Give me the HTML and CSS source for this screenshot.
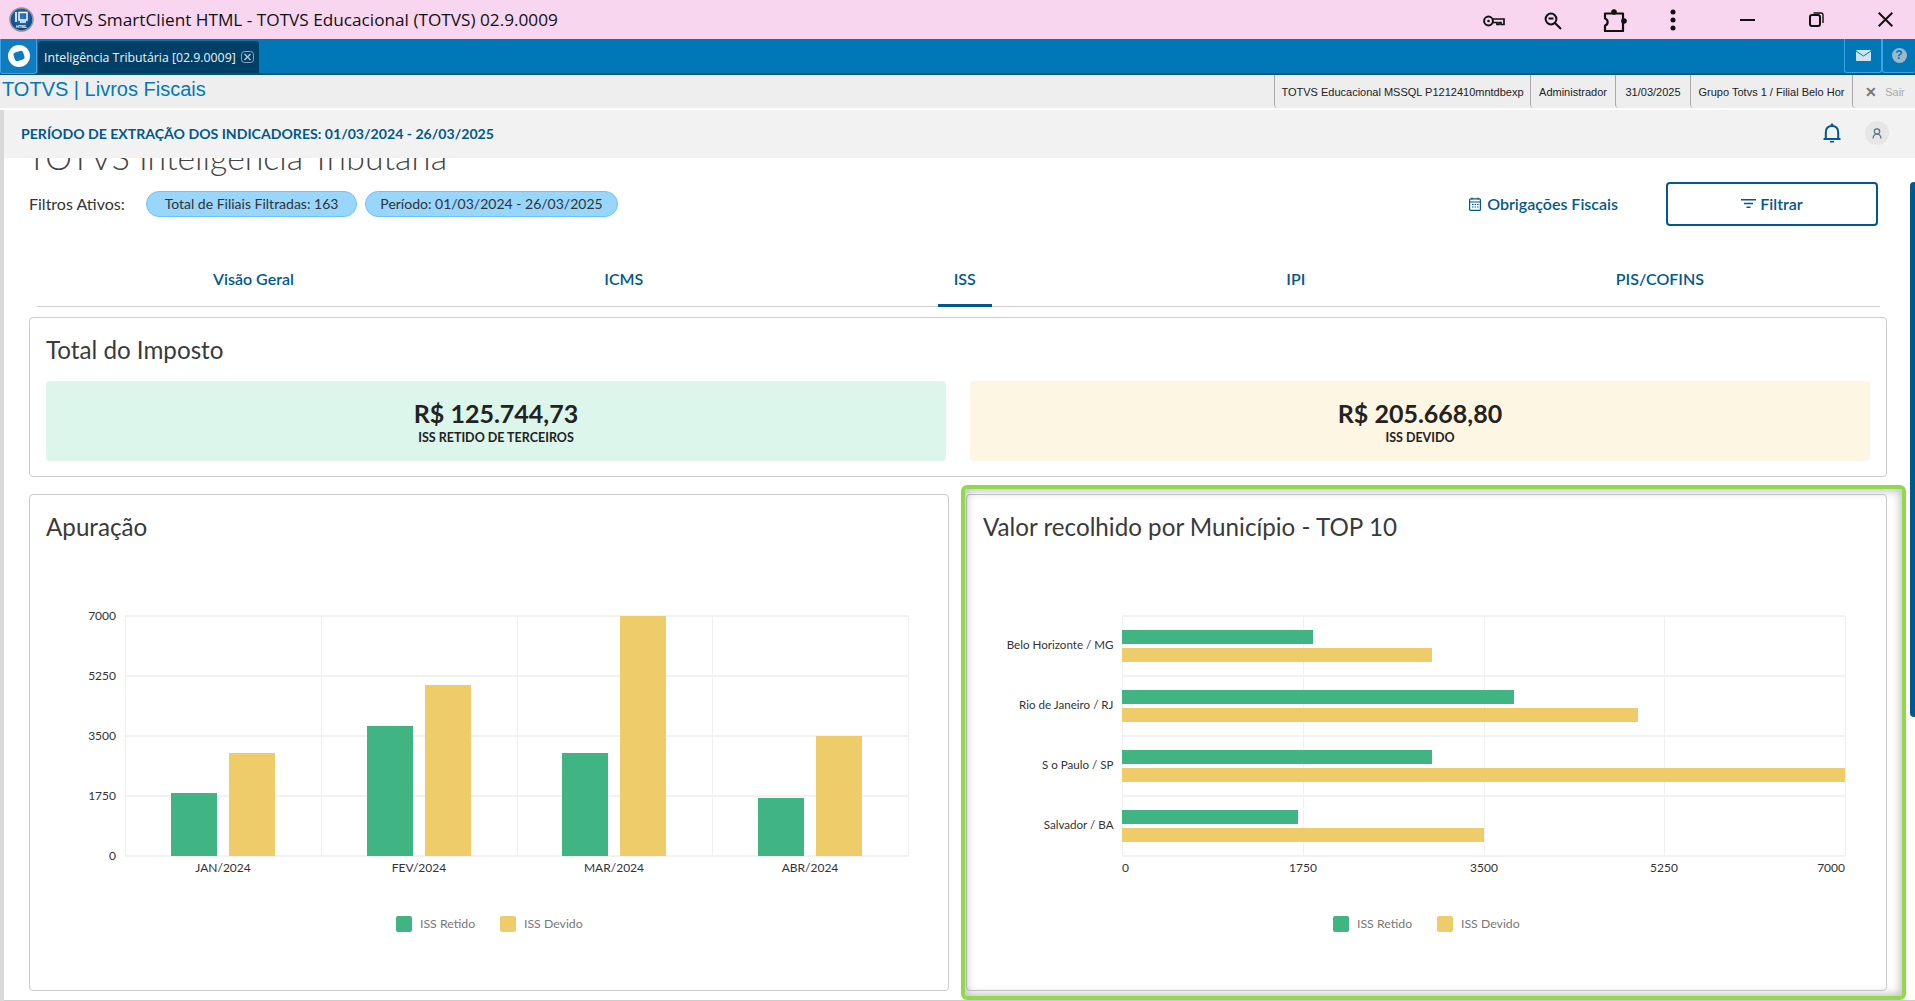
FILE: index.html
```html
<!DOCTYPE html>
<html lang="pt-BR">
<head>
<meta charset="utf-8">
<title>TOTVS SmartClient HTML</title>
<link rel="stylesheet" href="styles.css">
</head>
<body>
<div class="app">
  <header class="titlebar">
    <svg class="app-icon" width="25" height="25" viewBox="0 0 25 25"><defs><radialGradient id="ball" cx="50%" cy="40%" r="60%"><stop offset="0" stop-color="#2b7fc8"/><stop offset="1" stop-color="#0f3f78"/></radialGradient></defs><circle cx="12.500" cy="12.500" r="11.500" fill="url(#ball)" stroke="#8d98a3" stroke-width="1.600"/><path d="M10 5.500h8v7.500h-8z" fill="none" stroke="#fff" stroke-width="1.400"/><path d="M7 5v10M11 15h6" stroke="#fff" stroke-width="1.600"/><text class="app-icon-text" x="12.500" y="21">HTML</text></svg>
    <span class="window-title">TOTVS SmartClient HTML - TOTVS Educacional (TOTVS) 02.9.0009</span>
    <div class="win-icons">
      <svg class="ic-key" width="22" height="12" viewBox="0 0 22 12"><circle cx="5.500" cy="6" r="4.400" fill="none" stroke="#111" stroke-width="2"/><circle cx="5.500" cy="6" r="1.300" fill="#111"/><path d="M10 4h11v5.500h-3V7.500h-2v2h-2V7.500H10" fill="none" stroke="#111" stroke-width="1.700"/></svg>
      <svg class="ic-zoom" width="18" height="18" viewBox="0 0 18 18"><circle cx="7" cy="7" r="5.400" fill="none" stroke="#111" stroke-width="2"/><path d="M4.500 6.500h5M11 11l6 6" stroke="#111" stroke-width="2"/></svg>
      <svg class="ic-puzzle" width="24" height="23" viewBox="0 0 24 23"><circle cx="11" cy="3" r="2.800" fill="#111"/><circle cx="21" cy="12" r="2.800" fill="#111"/><path d="M2 4.500H20V22H2V16.500C5.500 15.500 5.500 10.500 2 9.500Z" fill="none" stroke="#111" stroke-width="2.200" stroke-linejoin="round"/></svg>
      <svg class="ic-dots" width="6" height="22" viewBox="0 0 6 22"><circle cx="3" cy="3" r="2.500" fill="#111"/><circle cx="3" cy="11" r="2.500" fill="#111"/><circle cx="3" cy="19" r="2.500" fill="#111"/></svg>
      <svg class="ic-min" width="15" height="2" viewBox="0 0 15 2"><path d="M0 1h15" stroke="#111" stroke-width="2"/></svg>
      <svg class="ic-restore" width="15" height="15" viewBox="0 0 15 15"><rect x="1" y="3" width="10" height="11" rx="2" fill="none" stroke="#111" stroke-width="2"/><path d="M4.500 1H12a2 2 0 0 1 2 2v8" fill="none" stroke="#111" stroke-width="1.400"/></svg>
      <svg class="ic-close" width="15" height="15" viewBox="0 0 15 15"><path d="M.7.7l13.600 13.600M14.300.7L.7 14.300" stroke="#111" stroke-width="2"/></svg>
    </div>
  </header>

  <nav class="tabbar">
    <div class="home-btn"><svg width="24" height="24" viewBox="0 0 24 24"><circle cx="12" cy="12" r="11" fill="#fff"/><rect x="7" y="7.500" width="10" height="9" rx="2.500" transform="rotate(-18 12 12)" fill="#0f7cc0"/></svg></div>
    <div class="tab">
      <span>Inteligência Tributária [02.9.0009]</span>
      <svg width="13" height="12" viewBox="0 0 13 12"><rect x=".5" y=".5" width="12" height="11" rx="3" fill="none" stroke="#8ea6b6"/><path d="M3.500 3l6 6M9.500 3l-6 6" stroke="#b9c8d2" stroke-width="1.400"/></svg>
    </div>
    <div class="tabbar-tools">
      <div class="tool-btn"><svg width="15" height="11" viewBox="0 0 15 11"><rect width="15" height="11" rx="1" fill="#cfe3ef"/><path d="M0 1l7.500 5L15 1" fill="none" stroke="#0078b8"/></svg></div>
      <div class="tool-btn tool-help"><span>?</span></div>
    </div>
  </nav>

  <div class="menubar">
    <span class="module">TOTVS | Livros Fiscais</span>
    <div class="session">
      <span class="s-item s-env">TOTVS Educacional MSSQL P1212410mntdbexp</span>
      <span class="s-item s-user">Administrador</span>
      <span class="s-item s-date">31/03/2025</span>
      <span class="s-item s-branch">Grupo Totvs 1 / Filial Belo Hor</span>
      <span class="s-item s-exit"><b>✕</b> Sair</span>
    </div>
  </div>

  <main class="main">
    <div class="edge"></div>
    <div class="view">
      <div class="strip">
        <span class="period">PERÍODO DE EXTRAÇÃO DOS INDICADORES: 01/03/2024 - 26/03/2025</span>
        <svg class="bell" width="18" height="20" viewBox="0 0 18 20"><circle cx="9" cy="1.800" r="1.400" fill="#00598c"/><path d="M2.800 15.500V9.500c0-4 2.200-6.500 6.200-6.500s6.200 2.500 6.200 6.500v6" fill="none" stroke="#00598c" stroke-width="2"/><path d="M.5 16h17" stroke="#00598c" stroke-width="2"/><path d="M7 18.700h4" stroke="#00598c" stroke-width="1.600"/></svg>
        <div class="avatar"><svg width="10" height="11" viewBox="0 0 10 11"><circle cx="5" cy="3.500" r="2.700" fill="none" stroke="#5b6c7d" stroke-width="1.200"/><path d="M1 10.500c.3-3 1.800-4.500 4-4.500s3.700 1.500 4 4.500" fill="none" stroke="#5b6c7d" stroke-width="1.200"/></svg></div>
      </div>
      <div class="scroller">
        <h1 class="page-title">TOTVS Inteligência Tributária</h1>
        <div class="filters">
          <span class="filters-label">Filtros Ativos:</span>
          <span class="chip chip-a">Total de Filiais Filtradas: 163</span>
          <span class="chip chip-b">Período: 01/03/2024 - 26/03/2025</span>
          <a class="link-btn"><svg width="12" height="14" viewBox="0 0 12 14"><rect x=".6" y="1.800" width="10.800" height="11.600" rx="1" fill="none" stroke="#00598c" stroke-width="1.200"/><path d="M.6 5h10.800M3 .5v2M9 .5v2M3 7.500h1.500M5.500 7.500H7M8 7.500h1.500M3 10h1.500M5.500 10H7M8 10h1.500" stroke="#00598c" stroke-width="1.100"/></svg>Obrigações Fiscais</a>
          <button class="filter-btn"><svg width="15" height="9" viewBox="0 0 15 9"><path d="M0 .7h15M3 4.500h9M5.500 8.300h4" stroke="#00598c" stroke-width="1.400"/></svg>Filtrar</button>
        </div>
        <div class="tabs">
          <span class="tab-link">Visão Geral</span>
          <span class="tab-link">ICMS</span>
          <span class="tab-link active">ISS</span>
          <span class="tab-link">IPI</span>
          <span class="tab-link">PIS/COFINS</span>
        </div>
        <section class="card total">
          <h2 class="card-title">Total do Imposto</h2>
          <div class="kpis">
            <div class="kpi kpi-green"><strong>R$ 125.744,73</strong><span>ISS RETIDO DE TERCEIROS</span></div>
            <div class="kpi kpi-cream"><strong>R$ 205.668,80</strong><span>ISS DEVIDO</span></div>
          </div>
        </section>
        <div class="charts">
          <section class="card">
            <h2 class="card-title">Apuração</h2>
            <svg class="chart" width="886" height="431" viewBox="0 0 886 431">
              <g class="grid-h"><path d="M79 73H862M79 133H862M79 193H862M79 253H862M79 313H862"/></g>
              <g class="grid-v"><path d="M79.500 73V313M275.500 73V313M471.500 73V313M666.500 73V313M862.500 73V313"/></g>
              <g class="bar-g"><rect x="125" y="250" width="46" height="63"/><rect x="321" y="183" width="46" height="130"/><rect x="516" y="210" width="46" height="103"/><rect x="712" y="255" width="46" height="58"/></g>
              <g class="bar-y"><rect x="183" y="210" width="46" height="103"/><rect x="379" y="142" width="46" height="171"/><rect x="574" y="73" width="46" height="240"/><rect x="770" y="193" width="46" height="120"/></g>
              <g class="axis end"><text x="70" y="77">7000</text><text x="70" y="137">5250</text><text x="70" y="197">3500</text><text x="70" y="257">1750</text><text x="70" y="317">0</text></g>
              <g class="axis mid"><text x="177" y="329">JAN/2024</text><text x="373" y="329">FEV/2024</text><text x="568" y="329">MAR/2024</text><text x="764" y="329">ABR/2024</text></g>
              <rect class="sw-g" x="350" y="373" width="16" height="16" rx="2"/><text class="legend" x="374" y="385">ISS Retido</text>
              <rect class="sw-y" x="454" y="373" width="16" height="16" rx="2"/><text class="legend" x="478" y="385">ISS Devido</text>
            </svg>
          </section>
          <section class="card highlighted">
            <h2 class="card-title">Valor recolhido por Município - TOP 10</h2>
            <svg class="chart" width="886" height="431" viewBox="0 0 886 431">
              <g class="grid-h"><path d="M139 73H862M139 133H862M139 193H862M139 253H862M139 313H862"/></g>
              <g class="grid-v"><path d="M139.500 73V313M320.500 73V313M501.500 73V313M681.500 73V313M862.500 73V313"/></g>
              <g class="bar-g"><rect x="139" y="87" width="191" height="14"/><rect x="139" y="147" width="392" height="14"/><rect x="139" y="207" width="310" height="14"/><rect x="139" y="267" width="176" height="14"/></g>
              <g class="bar-y"><rect x="139" y="105" width="310" height="14"/><rect x="139" y="165" width="516" height="14"/><rect x="139" y="225" width="723" height="14"/><rect x="139" y="285" width="362" height="14"/></g>
              <g class="axis end city"><text x="130.500" y="106">Belo Horizonte / MG</text><text x="130.500" y="166">Rio de Janeiro / RJ</text><text x="130.500" y="226">S o Paulo / SP</text><text x="130.500" y="286">Salvador / BA</text></g>
              <g class="axis mid"><text x="320" y="329">1750</text><text x="501" y="329">3500</text><text x="681" y="329">5250</text></g>
              <text class="axis" x="139" y="329">0</text><text class="axis end" x="862" y="329">7000</text>
              <rect class="sw-g" x="350" y="373" width="16" height="16" rx="2"/><text class="legend" x="374" y="385">ISS Retido</text>
              <rect class="sw-y" x="454" y="373" width="16" height="16" rx="2"/><text class="legend" x="478" y="385">ISS Devido</text>
            </svg>
          </section>
        </div>
      </div>
      <div class="scroll-thumb"></div>
    </div>
  </main>
</div>
</body>
</html>
```
FILE: styles.css
```css
* { box-sizing: border-box; }
html, body { margin: 0; height: 100%; overflow: hidden; background: #fff; }
body { font-family: "Lato", "Open Sans", sans-serif; }
.app { display: flex; flex-direction: column; height: 1001px; }

.titlebar { height: 39px; flex: none; background: #f9d6ef; display: flex; align-items: center; padding-left: 9px; }
.app-icon { flex: none; }
.app-icon-text { font: bold 4px "Liberation Sans", sans-serif; fill: #fff; text-anchor: middle; }
.window-title { margin-left: 7px; font: 17.200px "Open Sans", sans-serif; color: #111; white-space: nowrap; }
.win-icons { margin-left: auto; display: flex; align-items: center; height: 39px; padding-right: 22px; }
.ic-key { margin-right: 39px; margin-top: 2px; }
.ic-zoom { margin-right: 41px; margin-top: 2px; }
.ic-puzzle { margin-right: 43px; margin-top: 1px; }
.ic-dots { margin-right: 64px; }
.ic-min { margin-right: 54px; }
.ic-restore { margin-right: 54px; }

.tabbar { height: 36px; flex: none; background: #0078b8; border-bottom: 2px solid #00527f; display: flex; align-items: stretch; }
.home-btn { width: 37px; margin-bottom: -1px; border: 1px solid #3ea3e6; border-top: 0; border-radius: 0 0 3px 3px; display: flex; align-items: center; justify-content: center; background: #0f7cc0; }
.tab { width: 221px; margin: 2px 0 0 1px; background: #003f66; border-radius: 3px 3px 0 0; display: flex; align-items: center; padding-left: 6px; gap: 5px; color: #eef4f8; font: 12.300px "Open Sans", sans-serif; white-space: nowrap; }
.tabbar-tools { margin-left: auto; display: flex; }
.tool-btn { width: 38px; border: 1px solid #3ea3e6; border-top: 0; border-radius: 0 0 3px 3px; display: flex; align-items: center; justify-content: center; }
.tool-help { width: 33px; border-right: 0; }
.tool-help span { width: 15px; height: 15px; border-radius: 50%; background: #9db8c9; color: #0078b8; font: bold 12px/15px "Liberation Sans", sans-serif; text-align: center; }

.menubar { height: 33px; flex: none; background: #eee; display: flex; align-items: center; justify-content: space-between; margin-bottom: 2px; }
.module { padding-left: 2px; margin-bottom: 5px; font: 20px "Liberation Sans", sans-serif; color: #0079b8; white-space: nowrap; }
.session { display: flex; align-self: stretch; font: 11px "Liberation Sans", sans-serif; color: #222; }
.s-item { display: flex; align-items: center; justify-content: center; border-left: 1px solid #aaa; border-radius: 0 0 0 4px; white-space: nowrap; }
.s-env { width: 256px; }
.s-user { width: 85px; }
.s-date { width: 75px; }
.s-branch { width: 162px; }
.s-exit { width: 63px; color: #aaa; gap: 8px; padding-left: 2px; }
.s-exit b { color: #777; font-size: 14px; }

.main { flex: 1; min-height: 0; display: flex; }
.edge { width: 4px; flex: none; background: #d9d9d9; }
.view { flex: 1; min-width: 0; position: relative; display: flex; flex-direction: column; border-bottom: 1px solid #ccc; }
.strip { height: 48px; flex: none; background: #f2f2f2; display: flex; align-items: center; padding: 0 26px 2px 17px; position: relative; z-index: 2; }
.period { font-size: 14.100px; font-weight: 700; color: #00598c; white-space: nowrap; }
.bell { margin-left: auto; margin-right: 24px; }
.avatar { width: 24px; height: 24px; border-radius: 50%; background: #e6e6e6; display: flex; align-items: center; justify-content: center; }

.scroller { flex: 1; min-height: 0; overflow: hidden; padding: 0 28px 0 25px; }
.page-title { margin: -22px 0 0 -2px; height: 46px; font-size: 33.800px; line-height: 42px; font-weight: 300; color: #444; white-space: nowrap; }

.filters { height: 44px; display: flex; align-items: center; padding-right: 9px; }
.filters-label { font-size: 16px; padding-bottom: 2px; color: #333; width: 117px; flex: none; }
.chip { height: 26px; border-radius: 13px; background: #98d6fb; border: 1px solid #6fc2f6; color: #333; font-size: 14px; padding-bottom: 2px; display: flex; align-items: center; justify-content: center; white-space: nowrap; }
.chip-a { width: 211px; margin-right: 8px; }
.chip-b { width: 253px; }
.link-btn { margin-left: auto; display: flex; align-items: center; gap: 6px; font-size: 16px; font-weight: 600; color: #00598c; padding-bottom: 1px; }
.filter-btn { margin-left: 48px; width: 212px; height: 44px; padding: 0 0 2px; background: #fff; border: 2px solid #00598c; border-radius: 4px; display: flex; align-items: center; justify-content: center; gap: 4px; font: 600 16px "Lato", sans-serif; color: #00598c; }

.tabs { height: 81px; margin: 0 7px 0 8px; padding: 0 160px; border-bottom: 1px solid #ccc; display: flex; justify-content: space-between; align-items: stretch; }
.tab-link { padding: 27px 16px 0; height: 81px; display: flex; align-items: center; font-size: 16px; font-weight: 600; color: #00598c; white-space: nowrap; border-bottom: 3px solid transparent; }
.tab-link.active { border-bottom-color: #00598c; }

.card { background: #fff; border: 1px solid #ccc; border-radius: 4px; padding: 16px; }
.card-title { margin: 0; height: 32px; font-size: 24.200px; line-height: 32px; font-weight: 400; color: #3a3a3a; white-space: nowrap; }
.total { margin-top: 10px; height: 160px; }
.kpis { display: grid; grid-template-columns: 1fr 1fr; gap: 24px; margin-top: 15px; }
.kpi { height: 80px; padding-top: 2px; border-radius: 4px; display: flex; flex-direction: column; align-items: center; justify-content: center; color: #222; }
.kpi strong { font-size: 25px; line-height: 30px; font-weight: 700; }
.kpi span { margin-top: 2px; font-size: 12.500px; line-height: 16px; font-weight: 700; }
.kpi-green { background: #dcf6ec; }
.kpi-cream { background: #fdf6e3; }

.charts { display: grid; grid-template-columns: 920px 921px; gap: 17px; margin-top: 17px; }
.chart { display: block; }
.grid-h path { stroke: #f2f2f2; stroke-width: 2; fill: none; }
.grid-v path { stroke: #f0f0f0; stroke-width: 1; fill: none; }
.bar-g rect, .sw-g { fill: #41b483; }
.bar-y rect, .sw-y { fill: #efcc6a; }
.axis { font-size: 12px; fill: #333; }
.city { font-size: 11.600px; }
.axis.end, .end text { text-anchor: end; }
.mid text { text-anchor: middle; }
.legend { font-size: 12.300px; fill: #777; }

.highlighted { position: relative; }
.highlighted::after { content: ""; position: absolute; inset: -10px -20px -10px -6px; border: 4px solid #8fd94a; border-radius: 6px; box-shadow: inset 0 0 8px 2px rgba(0, 0, 0, .25); pointer-events: none; }
.scroll-thumb { position: absolute; top: 72px; right: 0; width: 5px; height: 535px; background: #00598c; border-radius: 4px 0 0 4px; }
```
